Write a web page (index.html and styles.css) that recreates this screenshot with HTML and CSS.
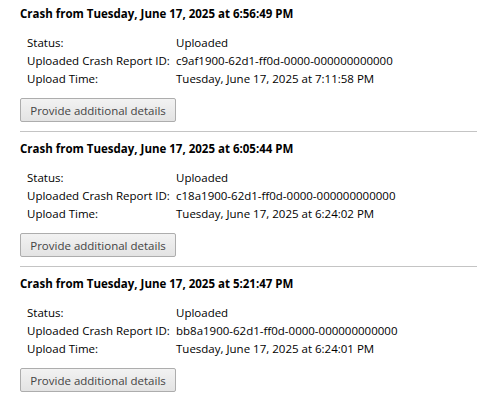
FILE: index.html
```html
<html lang="en">
<head>
  <meta charset="UTF-8" />
  <title>Crashes</title>
  <link rel="stylesheet" href="styles.css">
</head>
<body>

  <div class="crash">
    <h3 class="crash-title">Crash from Tuesday, June 17, 2025 at 6:56:49 PM</h3>
    <div class="crash-info">
      <span class="label">Status:</span><span class="value">Uploaded</span>
      <span class="label">Uploaded Crash Report ID:</span><span class="value">c9af1900-62d1-ff0d-0000-000000000000</span>
      <span class="label">Upload Time:</span><span class="value">Tuesday, June 17, 2025 at 7:11:58 PM</span>
    </div>
    <button class="details-btn">Provide additional details</button>
  </div>

  <div class="crash">
    <h3 class="crash-title">Crash from Tuesday, June 17, 2025 at 6:05:44 PM</h3>
    <div class="crash-info">
      <span class="label">Status:</span><span class="value">Uploaded</span>
      <span class="label">Uploaded Crash Report ID:</span><span class="value">c18a1900-62d1-ff0d-0000-000000000000</span>
      <span class="label">Upload Time:</span><span class="value">Tuesday, June 17, 2025 at 6:24:02 PM</span>
    </div>
    <button class="details-btn">Provide additional details</button>
  </div>

  <div class="crash">
    <h3 class="crash-title">Crash from Tuesday, June 17, 2025 at 5:21:47 PM</h3>
    <div class="crash-info">
      <span class="label">Status:</span><span class="value">Uploaded</span>
      <span class="label">Uploaded Crash Report ID:</span><span class="value">bb8a1900-62d1-ff0d-0000-000000000000</span>
      <span class="label">Upload Time:</span><span class="value">Tuesday, June 17, 2025 at 6:24:01 PM</span>
    </div>
    <button class="details-btn">Provide additional details</button>
  </div>

</body>
</html>
```

FILE: styles.css
```css
body {
  font-family: "Open Sans", sans-serif;
  font-size: 11.5px;
  color: #000;
  margin: 0;
  padding: 6px 1px 0 20px;
}
.crash {
  padding-bottom: 9px;
  border-bottom: 1px solid #c4c4c4;
}
.crash + .crash {
  padding-top: 9px;
}
.crash-title {
  font-size: 11.5px;
  font-weight: bold;
  line-height: 16px;
  margin: 0 0 12px;
}
.crash-info {
  display: grid;
  grid-template-columns: 149px auto;
  line-height: 18px;
  padding-left: 7px;
  margin-bottom: 10px;
  white-space: nowrap;
}
.details-btn {
  font-family: inherit;
  font-size: 11.5px;
  color: #444;
  width: 156px;
  height: 24px;
  padding: 0;
  border: 1px solid #adadad;
  border-radius: 2px;
  background: linear-gradient(#f2f2f2, #e3e3e3);
  display: block;
}
```
